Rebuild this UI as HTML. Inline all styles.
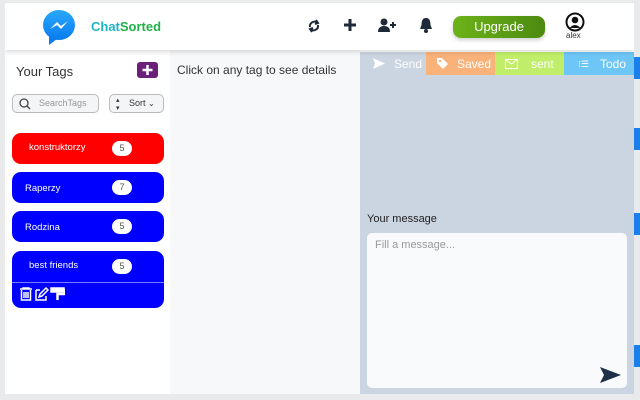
<!DOCTYPE html>
<html><head><meta charset="utf-8"><style>
*{box-sizing:border-box;margin:0;padding:0}
body{width:640px;height:400px;overflow:hidden;background:#e9eaec;font-family:"Liberation Sans",sans-serif;position:relative}
.frame{position:absolute;left:5px;top:3px;width:629px;height:391px;background:#fff;overflow:hidden}
.hdr{position:absolute;left:0;top:0;width:629px;height:47px;background:#fff;box-shadow:0 2px 5px rgba(0,0,0,.15);z-index:2}
.side{position:absolute;left:0;top:44px;width:165px;height:347px;background:#fff}
.mid{position:absolute;left:165px;top:47px;width:190px;height:344px;background:#f7f8fa}
.right{position:absolute;left:355px;top:49px;width:274px;height:342px;background:#cbd5e1}
.tab{position:absolute;top:0;height:23px;color:#fff;font-size:12px;line-height:24px}
.tag{position:absolute;left:7px;width:152px;height:31px;border-radius:9px;background:#0000ff;color:#fff;font-size:9.5px}
.tag span.n{position:absolute;left:100px;top:8px;width:20px;height:15px;border-radius:8px;background:#fff;color:#555;text-align:center;line-height:15px;font-size:9px}
.bt{position:absolute;width:6px;height:22px;background:#1a7fe8;left:634px}
</style></head><body>
<div class="bt" style="top:57px"></div><div class="bt" style="top:128px"></div><div class="bt" style="top:213px"></div><div class="bt" style="top:345px"></div>
<div class="frame">
<div class="hdr">
 <svg style="position:absolute;left:38px;top:7px" width="32" height="36" viewBox="0 0 32 36"><defs><linearGradient id="g" x1="0" y1="1" x2="0" y2="0"><stop offset="0" stop-color="#0a7cf0"/><stop offset="1" stop-color="#2aa8fa"/></linearGradient></defs><ellipse cx="16" cy="15" rx="16" ry="15" fill="url(#g)"/><path d="M6 25 L6 35 L14 29Z" fill="#0a7cf0"/><path d="M7 19 L14 12 L18 16 L25 11 L18 19 L14 15Z" fill="#fff"/></svg>
 <div style="position:absolute;left:86px;top:16px;font-size:13px;font-weight:bold"><span style="color:#1fb4c8">Chat</span><span style="color:#22b04a">Sorted</span></div>
 <svg style="position:absolute;left:302px;top:16px" width="14" height="14" viewBox="0 0 14 14" fill="none" stroke="#1e2a3a" stroke-width="2"><path d="M3 8A4.5 4.5 0 0 1 10 3.5M11 6A4.5 4.5 0 0 1 4 10.5"/><path d="M9 1 L11 4 L8 5" /><path d="M5 13 L3 10 L6 9"/></svg>
 <svg style="position:absolute;left:338px;top:15px" width="14" height="14"><path d="M7 1V13M1 7H13" stroke="#1e2a3a" stroke-width="3"/></svg>
 <svg style="position:absolute;left:373px;top:15px" width="20" height="14" viewBox="0 0 20 14" fill="#1e2a3a"><circle cx="6" cy="4" r="3.5"/><path d="M0 14Q0 8 6 8Q12 8 12 14Z"/><path d="M15 4V10M12 7H18" stroke="#1e2a3a" stroke-width="2"/></svg>
 <svg style="position:absolute;left:414px;top:14px" width="14" height="16" viewBox="0 0 14 16" fill="#1e2a3a"><path d="M7 1C3 1 2.5 5 2.5 8L1 12H13L11.5 8C11.5 5 11 1 7 1Z"/><circle cx="7" cy="14" r="2"/></svg>
 <div style="position:absolute;left:448px;top:13px;width:92px;height:22px;border-radius:8px;background:linear-gradient(90deg,#6cb31a,#4c8a10);color:#fff;font-size:13px;text-align:center;line-height:22px;box-shadow:0 2px 4px rgba(0,0,0,.2)">Upgrade</div>
 <svg style="position:absolute;left:560px;top:9px" width="20" height="20" viewBox="0 0 20 20"><circle cx="10" cy="10" r="8.5" fill="none" stroke="#111" stroke-width="2"/><circle cx="10" cy="8" r="3.3" fill="#111"/><path d="M4.5 16Q10 10 15.5 16" fill="#111"/></svg>
 <div style="position:absolute;left:561px;top:28px;font-size:8px;color:#333">alex</div>
</div>
<div class="side">
 <div style="position:absolute;left:11px;top:17px;font-size:13px;color:#333">Your Tags</div>
 <div style="position:absolute;left:132px;top:15px;width:21px;height:16px;border-radius:3px;background:#6b1f78"><svg width="21" height="16"><path d="M10.5 3V13M5.5 8H15.5" stroke="#fff" stroke-width="2.5"/></svg></div>
 <div style="position:absolute;left:7px;top:47px;width:87px;height:19px;border:1px solid #bbb;border-radius:5px;background:#f4f5f7;font-size:9px;color:#999;line-height:17px;padding-left:26px">SearchTags<svg style="position:absolute;left:6px;top:3px" width="12" height="12"><circle cx="5" cy="5" r="4" fill="none" stroke="#444" stroke-width="1.3"/><path d="M8 8L11 11" stroke="#444" stroke-width="1.3"/></svg></div>
 <div style="position:absolute;left:104px;top:47px;width:55px;height:19px;border:1px solid #bbb;border-radius:5px;background:#f4f5f7;font-size:9px;color:#333;line-height:17px;padding-left:19px">Sort <span style="font-size:8px">⌄</span><span style="position:absolute;left:6px;font-size:7px;line-height:8px;top:2px">▴<br>▾</span></div>
 <div class="tag" style="top:86px;background:#ff0000"><span style="position:absolute;left:17px;top:9px">konstruktorzy</span><span class="n">5</span></div>
 <div class="tag" style="top:125px"><span style="position:absolute;left:13px;top:11px">Raperzy</span><span class="n">7</span></div>
 <div class="tag" style="top:164px"><span style="position:absolute;left:13px;top:11px">Rodzina</span><span class="n">5</span></div>
 <div class="tag" style="top:204px;height:57px"><span style="position:absolute;left:17px;top:9px">best friends</span><span class="n">5</span><div style="position:absolute;left:0;top:31px;width:152px;height:1px;background:#7a7aff"></div>
  <svg style="position:absolute;left:7px;top:36px" width="46" height="14" fill="none" stroke="#fff" stroke-width="1.5"><path d="M1 2H13M4 2V1H10V2M2.5 3V13H11.5V3M5 5V11M7 5V11M9 5V11"/><path d="M17 3H21M17 3V13H27V9M20 10L21 7L27 1L29 3L23 9Z"/><path d="M32 1H45V5H32Z" fill="#fff"/><path d="M45 3H46V7H38.5V13" stroke-width="2.5"/></svg></div>
</div>
<div class="mid"><div style="position:absolute;left:7px;top:13px;font-size:12px;color:#333">Click on any tag to see details</div></div>
<div class="right">
 <div class="tab" style="left:0;width:66px"><svg style="position:absolute;left:13px;top:6px" width="12" height="11"><path d="M0 0L12 5.5L0 11L2 5.5Z" fill="#fff"/></svg><span style="position:absolute;left:34px">Send</span></div>
 <div class="tab" style="left:66px;width:69px;background:#f9b27a"><svg style="position:absolute;left:10px;top:5px" width="13" height="13"><path d="M1 1H6L12 7L7 12L1 6Z" fill="#fff"/><circle cx="4" cy="4" r="1.2" fill="#f9b27a"/></svg><span style="position:absolute;left:31px">Saved</span></div>
 <div class="tab" style="left:135px;width:69px;background:#c0ee6a"><svg style="position:absolute;left:10px;top:7px" width="13" height="10"><rect x=".5" y=".5" width="12" height="9" fill="none" stroke="#fff"/><path d="M.5 .5L6.5 5L12.5 .5" fill="none" stroke="#fff"/></svg><span style="position:absolute;left:36px">sent</span></div>
 <div class="tab" style="left:204px;width:70px;background:#6ec6f7"><span style="position:absolute;left:14px;font-size:9px">⁝☰</span><span style="position:absolute;left:36px">Todo</span></div>
 <div style="position:absolute;left:7px;top:161px;font-size:11px;color:#222">Your message</div>
 <div style="position:absolute;left:7px;top:181px;width:260px;height:155px;background:#f8fafc;border-radius:5px"><div style="position:absolute;left:8px;top:6px;font-size:11px;color:#999">Fill a message...</div><svg style="position:absolute;left:233px;top:134px" width="21" height="16"><path d="M0 0L21 8L0 16L4 8Z" fill="#1e3048"/></svg></div>
</div>
</div>
</body></html>
